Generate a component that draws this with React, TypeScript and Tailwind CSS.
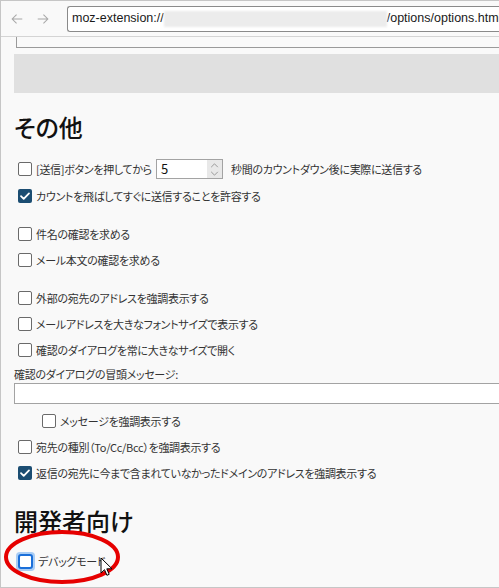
import React from "react";

const JP = "font-['Noto_Sans_CJK_JP','Noto_Sans',sans-serif] [font-feature-settings:'palt']";

function Box({ checked = false, focus = false }: { checked?: boolean; focus?: boolean }) {
  if (focus) {
    return (
      <span className="flex h-[19px] w-[19px] shrink-0 items-center justify-center rounded-[4px] bg-[#a9cdf5]">
        <span className="h-[15px] w-[15px] rounded-[3px] border-2 border-[#1a6fd9] bg-white" />
      </span>
    );
  }
  if (checked) {
    return (
      <span className="flex h-[14px] w-[14px] shrink-0 items-center justify-center rounded-[2px] bg-[#1b4d72]">
        <svg viewBox="0 0 14 14" className="h-[14px] w-[14px]">
          <path d="M3 7.2l2.7 2.7L11 4.4" fill="none" stroke="white" strokeWidth="1.8" strokeLinecap="round" strokeLinejoin="round" />
        </svg>
      </span>
    );
  }
  return <span className="h-[14px] w-[14px] shrink-0 rounded-[2px] border border-[#6a6a6a] bg-white" />;
}

function Row({ label, checked, className = "" }: { label: string; checked?: boolean; className?: string }) {
  return (
    <div className={`flex h-[26px] items-center gap-[4px] pl-[4px] ${className}`}>
      <Box checked={checked} />
      <span>{label}</span>
    </div>
  );
}

export default function App() {
  return (
    <div className={`relative h-[588px] w-[499px] overflow-hidden border-t border-l border-b border-[#c6c6c6] bg-[#f9f9f9] text-[11px] tracking-[-0.3px] text-[#333] ${JP}`}>
      {/* toolbar */}
      <div className="flex h-[36px] items-center border-b border-[#d4d4d4]">
        <div className="flex w-[66px] items-center gap-[12px] pl-[9px] text-[#a8a8a8]">
          <svg viewBox="0 0 16 16" className="h-[14px] w-[14px]">
            <path d="M14 8H2.5M7.5 3L2.5 8l5 5" fill="none" stroke="currentColor" strokeWidth="1.2" />
          </svg>
          <svg viewBox="0 0 16 16" className="h-[14px] w-[14px]">
            <path d="M2 8h11.5M8.5 3l5 5-5 5" fill="none" stroke="currentColor" strokeWidth="1.2" />
          </svg>
        </div>
        <div className="flex h-[26px] flex-1 items-center overflow-hidden whitespace-nowrap rounded-l-[3px] border border-r-0 border-[#8a8a8a] bg-white pl-[4px] font-['Liberation_Sans',sans-serif] text-[12.5px] tracking-normal text-[#1a1a1a] [font-feature-settings:normal]">
          <span className="shrink-0">moz-extension://</span>
          <span className="h-[16px] w-[223px] shrink-0 bg-[#ececec] blur-[1px]" />
          <span>/options/options.html</span>
        </div>
      </div>

      <div className="pl-[13px]">
        <div className="ml-[2px] h-[11px] border-l border-b border-[#9a9a9a]" />
        <div className="mt-[6px] h-[39px] bg-[#e0e0e0]" />

        <h2 className="mt-[18px] h-[32px] text-[24px] font-medium leading-[32px] tracking-normal text-[#111]">その他</h2>

        <div className="mt-[13px] flex h-[26px] items-center gap-[4px] pl-[4px]">
          <Box />
          <span>[送信]ボタンを押してから</span>
          <div className="flex h-[20px] w-[67px] items-center border border-[#a3a3a3] bg-white">
            <span className="flex-1 pl-[4px] text-[13px] text-[#111]">5</span>
            <span className="flex h-full w-[15px] flex-col items-center justify-center bg-[#e8e8e8] text-[#8a8a8a]">
              <svg viewBox="0 0 10 6" className="h-[5px] w-[9px]"><path d="M1 5l4-4 4 4" fill="none" stroke="currentColor" strokeWidth="1" /></svg>
              <svg viewBox="0 0 10 6" className="mt-[3px] h-[5px] w-[9px]"><path d="M1 1l4 4 4-4" fill="none" stroke="currentColor" strokeWidth="1" /></svg>
            </span>
          </div>
          <span className="pl-[4px]">秒間のカウントダウン後に実際に送信する</span>
        </div>
        <Row label="カウントを飛ばしてすぐに送信することを許容する" checked className="mt-[1px]" />

        <Row label="件名の確認を求める" className="mt-[12px]" />
        <Row label="メール本文の確認を求める" />

        <Row label="外部の宛先のアドレスを強調表示する" className="mt-[12px]" />
        <Row label="メールアドレスを大きなフォントサイズで表示する" />
        <Row label="確認のダイアログを常に大きなサイズで開く" />

        <div className="mt-[3px] h-[17px] leading-[17px]">確認のダイアログの冒頭メッセージ:</div>
        <div className="h-[21px] border border-r-0 border-[#a3a3a3] bg-white" />

        <Row label="メッセージを強調表示する" className="mt-[4px] pl-[28px]" />
        <Row label="宛先の種別（To/Cc/Bcc）を強調表示する" />
        <Row label="返信の宛先に今まで含まれていなかったドメインのアドレスを強調表示する" checked />

        <h2 className="mt-[19px] h-[32px] text-[24px] font-medium leading-[32px] tracking-normal text-[#111]">開発者向け</h2>

        <div className="mt-[11px] flex h-[26px] items-center gap-[3px] pl-[2px]">
          <Box focus />
          <span>デバッグモード</span>
        </div>
      </div>

      {/* annotation ellipse */}
      <svg className="absolute left-0 top-[526px] h-[62px] w-[125px]" viewBox="0 0 125 62">
        <ellipse cx="61" cy="30" rx="56" ry="25" fill="none" stroke="#e60000" strokeWidth="4" />
      </svg>
      {/* mouse cursor */}
      <svg className="absolute left-[99px] top-[556px] h-[20px] w-[13px]" viewBox="0 0 13 20">
        <path d="M1 1v15l3.5-3.3 2.4 5.6 2.3-1-2.4-5.5H12z" fill="white" stroke="black" strokeWidth="1" strokeLinejoin="round" />
      </svg>
    </div>
  );
}
